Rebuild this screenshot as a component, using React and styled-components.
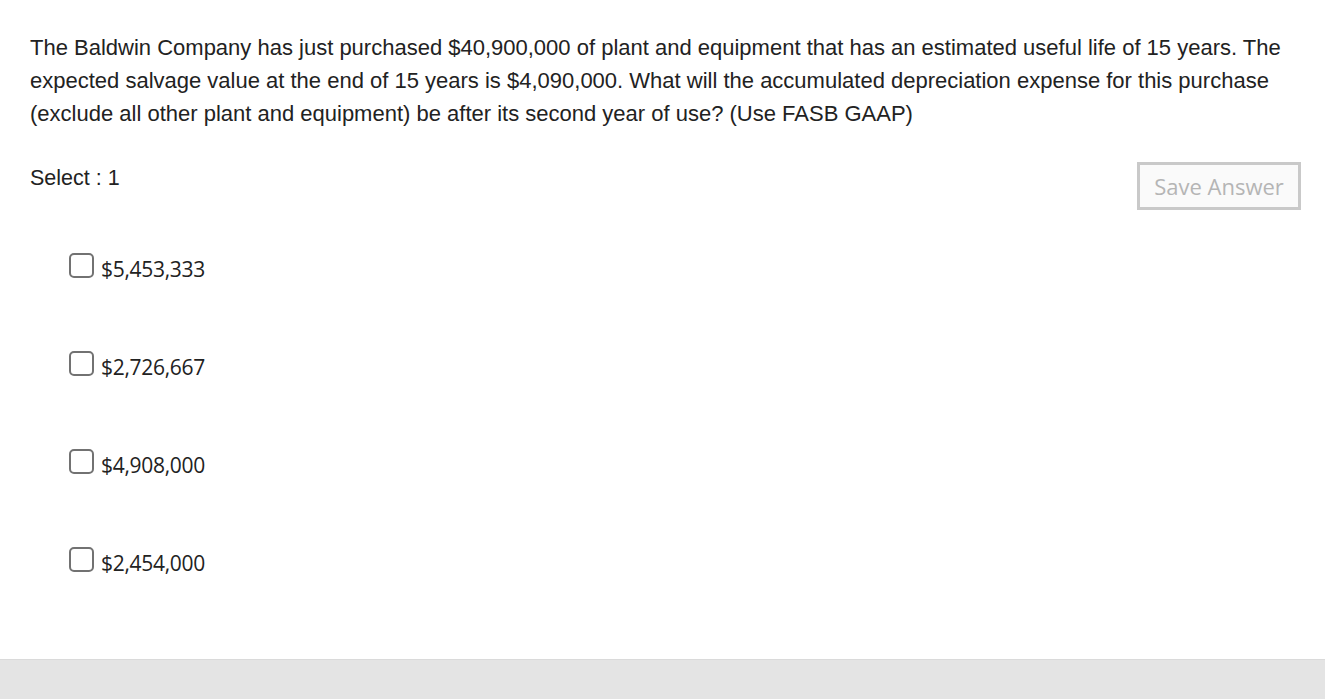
import styled, { createGlobalStyle } from "styled-components";

const Global = createGlobalStyle`
  html, body {
    margin: 0;
    padding: 0;
    background: #fff;
  }
`;

const Page = styled.div`
  min-height: 100vh;
  display: flex;
  flex-direction: column;
`;

const Main = styled.main`
  flex: 1;
  padding: 31px 24px 0 30px;
`;

const Question = styled.p`
  margin: 0;
  font-family: "Liberation Sans", Arial, sans-serif;
  font-size: 22px;
  line-height: 33px;
  color: #222;
`;

const Header = styled.div`
  display: flex;
  justify-content: space-between;
  align-items: flex-start;
  margin-top: 31px;
`;

const SelectLabel = styled.div`
  font-family: "Liberation Sans", Arial, sans-serif;
  font-size: 21.5px;
  line-height: 33px;
  margin-top: 1px;
  color: #222;
`;

const SaveButton = styled.button`
  width: 164px;
  height: 48px;
  margin-top: 1px;
  border: 3px solid #c9c9c9;
  background: #fafafa;
  color: #b5b5b5;
  font-family: "Open Sans", "Noto Sans", sans-serif;
  font-size: 22px;
  padding: 0;
  cursor: default;
`;

const Options = styled.ul`
  list-style: none;
  margin: 6px 0 0 39px;
  padding: 0;
`;

const Option = styled.li`
  display: flex;
  align-items: center;
  gap: 7px;
  height: 98px;
`;

const Box = styled.span`
  width: 21px;
  height: 21px;
  border: 2px solid #727272;
  border-radius: 5px;
  box-sizing: content-box;
  background: #fff;
`;

const OptionText = styled.span`
  font-family: "Open Sans", "Noto Sans", sans-serif;
  font-size: 21px;
  color: #222;
  letter-spacing: -0.3px;
  margin-top: 8px;
`;

const Footer = styled.footer`
  height: 39px;
  background: #e4e4e4;
  border-top: 1px solid #dadada;
`;

const answers = ["$5,453,333", "$2,726,667", "$4,908,000", "$2,454,000"];

export default function App() {
  return (
    <Page>
      <Global />
      <Main>
        <Question>
          The Baldwin Company has just purchased $40,900,000 of plant and
          equipment that has an estimated useful life of 15 years. The expected
          salvage value at the end of 15 years is $4,090,000. What will the
          accumulated depreciation expense for this purchase (exclude all other
          plant and equipment) be after its second year of use? (Use FASB GAAP)
        </Question>
        <Header>
          <SelectLabel>Select : 1</SelectLabel>
          <SaveButton>Save Answer</SaveButton>
        </Header>
        <Options>
          {answers.map((a) => (
            <Option key={a}>
              <Box />
              <OptionText>{a}</OptionText>
            </Option>
          ))}
        </Options>
      </Main>
      <Footer />
    </Page>
  );
}
